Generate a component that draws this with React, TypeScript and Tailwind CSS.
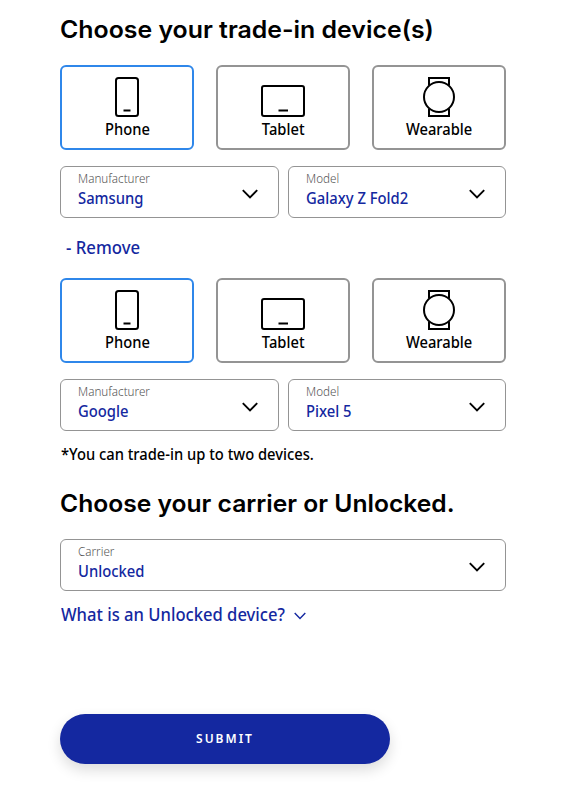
import React from "react";

type Device = "Phone" | "Tablet" | "Wearable";

function DeviceIcon({ type }: { type: Device }) {
  return (
    <svg width="48" height="40" viewBox="0 0 48 40" fill="none" stroke="#000" strokeWidth="2" className="block">
      {type === "Phone" && (
        <>
          <rect x="13" y="1" width="22" height="38" rx="2.5" />
          <path d="M20.5 33.5h7" />
        </>
      )}
      {type === "Tablet" && (
        <>
          <rect x="3" y="9" width="42" height="30" rx="2" />
          <path d="M19.5 33.5h9.5" />
        </>
      )}
      {type === "Wearable" && (
        <>
          <path d="M14 8.5V1h20v7.5M14 31.5V39h20v-7.5" />
          <circle cx="24" cy="20" r="15" />
        </>
      )}
    </svg>
  );
}

function DeviceCard({ type, active }: { type: Device; active?: boolean }) {
  return (
    <button
      className={`flex h-[85px] w-[134px] flex-col items-center rounded-[6px] border-2 pt-[10px] ${
        active ? "border-[#2f87ea]" : "border-[#949494]"
      }`}
    >
      <DeviceIcon type={type} />
      <span className="mt-[2px] scale-x-[0.92] text-[16px] leading-[20px] font-medium">{type}</span>
    </button>
  );
}

function Select({ label, value, className }: { label: string; value: string; className: string }) {
  return (
    <div className={`flex h-[52px] items-center justify-between rounded-[6px] border border-[#949494] pr-5 pl-[17px] ${className}`}>
      <div className="flex h-full flex-col items-start whitespace-nowrap">
        <span className="mt-1 origin-left scale-x-[0.97] text-[12px] leading-[16px] font-light text-[#555]">{label}</span>
        <span className="origin-left scale-x-[0.925] text-[16px] leading-[22px] font-medium text-[#1428a0]">{value}</span>
      </div>
      <svg width="16" height="10" viewBox="0 0 16 10" fill="none" stroke="#000" strokeWidth="1.9" className="mt-1">
        <path d="M.8 1.2 8 8.4l7.2-7.2" />
      </svg>
    </div>
  );
}

function TradeIn({ maker, model }: { maker: string; model: string }) {
  return (
    <section>
      <div className="flex justify-between">
        <DeviceCard type="Phone" active />
        <DeviceCard type="Tablet" />
        <DeviceCard type="Wearable" />
      </div>
      <div className="mt-4 flex justify-between">
        <Select label="Manufacturer" value={maker} className="w-[219px]" />
        <Select label="Model" value={model} className="w-[218px]" />
      </div>
    </section>
  );
}

export default function App() {
  return (
    <main className="h-[786px] w-[570px] overflow-hidden bg-white pl-[60px] font-['Noto_Sans',sans-serif] text-black">
      <div className="w-[446px]">
        <h1 className="h-[65px] pt-[15px] font-['Inter',sans-serif] text-[24px] leading-[30px] font-semibold whitespace-nowrap">
          <span className="inline-block origin-left scale-x-[1.036]">Choose your trade-in device(s)</span>
        </h1>
        <TradeIn maker="Samsung" model="Galaxy Z Fold2" />
        <button className="flex h-[58px] items-center pl-[6px] text-[18px] font-medium text-[#1428a0]">
          <span className="origin-left scale-x-[0.93] whitespace-nowrap">- Remove</span>
        </button>
        <div className="mt-[2px]">
          <TradeIn maker="Google" model="Pixel 5" />
        </div>
        <p className="mt-[11px] h-[25px] pl-px text-[16px] leading-6 font-medium whitespace-nowrap">
          <span className="inline-block origin-left scale-x-[0.92]">*You can trade-in up to two devices.</span>
        </p>
        <h2 className="h-[72px] pt-[22px] font-['Inter',sans-serif] text-[24px] leading-[30px] font-semibold whitespace-nowrap">
          <span className="inline-block origin-left scale-x-[1.026]">Choose your carrier or Unlocked.</span>
        </h2>
        <Select label="Carrier" value="Unlocked" className="w-full" />
        <button className="mt-[11px] flex h-6 w-[246px] items-center justify-between pl-px text-[18px] leading-6 font-medium text-[#1428a0]">
          <span className="w-[225px] origin-left scale-x-[0.922] text-left whitespace-nowrap">What is an Unlocked device?</span>
          <svg width="12" height="8" viewBox="0 0 12 8" fill="none" stroke="#1428a0" strokeWidth="1.4" className="mt-[3px]">
            <path d="m.7 1 5.3 5.4L11.3 1" />
          </svg>
        </button>
        <button className="mt-[88px] flex h-[50px] w-[330px] items-center justify-center rounded-full bg-[#1428a0] text-[12px] font-semibold tracking-[2px] text-white shadow-[0_6px_14px_rgba(0,0,0,0.14)]">
          <span>SUBMIT</span>
        </button>
      </div>
    </main>
  );
}
